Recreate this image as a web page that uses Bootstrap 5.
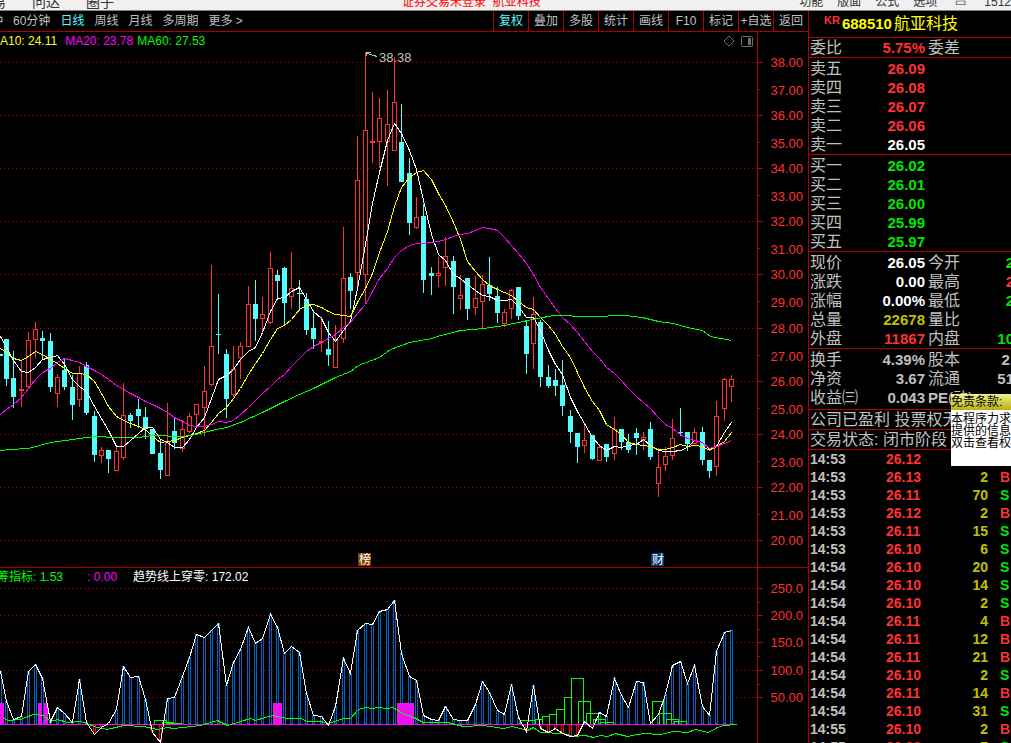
<!DOCTYPE html>
<html lang="zh-CN">
<head>
<meta charset="utf-8">
<meta name="viewport" content="width=device-width, initial-scale=1">
<title>航亚科技 688510</title>
<link href="https://cdn.jsdelivr.net/npm/bootstrap@5.3.0/dist/css/bootstrap.min.css" rel="stylesheet">
<style>
:root{--line:#b00000;--up:#ff3232;--down:#00e600;--txt:#c0c0c0;--cyan:#54fcfc;--vol:#c0c000}
body{background:#000;color:var(--txt);font:12px/16px "Liberation Sans","Noto Sans CJK SC",sans-serif}
button{background:none;border:0;padding:0;color:inherit;font:inherit;white-space:nowrap}
.menubar{height:11px;background:#f0f0f0;border-bottom:1px solid #808080;color:#333;white-space:nowrap}
.menubar button,.menubar span{line-height:16px}
.menu-side{width:402px;gap:26px;margin-left:-8px;font-size:14px}
.login{color:#f00}
.menu-main{gap:14px}
.toolbar{height:21px;border-bottom:1px solid var(--line)}
.toolbar .periods{gap:10px;margin-left:-9px}
.toolbar .on{color:var(--cyan)}
.tools button{width:35px;border-left:1px solid var(--line)}
.line-b{border-bottom:1px solid var(--line)}
.line-r{border-right:1px solid var(--line)}
.axis{width:50px;flex:none}
.legend{height:18px;white-space:nowrap}
.legend-sub{height:17px;padding-top:2px;white-space:nowrap}
.legend-cut{margin-left:-3px}
.k-up{color:var(--up)}.k-down{color:var(--down)}.k-white{color:#fff}.k-vol{color:var(--vol)}
.k-yellow{color:#ff0}.k-mag{color:#f0f}.k-green{color:#0f0}
svg{display:block}
.quote{width:203px;flex:none;border-left:1px solid var(--line)}
.stock{height:27px;font-size:16px;gap:2px}
.stock sup{font-size:11px;top:-4px;margin-left:15px}
.stock b{font-size:15px}
.grid-t{table-layout:fixed;width:204px;margin-left:1px;font-size:16px;line-height:19px;white-space:nowrap}
.grid-t th,.grid-t td{padding:0;height:19px;font-weight:400}
.grid-t td{font-size:15px;font-weight:700;text-align:right}
.grid-t th+td+th{padding-left:3px}
.c1{width:50px}.c2{width:65px}.c3{width:53px}
.pad1{padding-top:1px}
.pad2{padding-bottom:2px}
.pe{font-size:15px}
.note{height:20px;line-height:19px;font-size:16px;padding-left:1px;white-space:nowrap;overflow:hidden}
.trades{table-layout:fixed;width:202px;margin-left:1px;font-size:14px;line-height:18px;font-weight:700}
.trades td{padding:0;height:18px}
.trades td:nth-child(3){color:var(--vol);text-align:right}
.trades td:nth-child(2){color:var(--up)}
.trades td:nth-child(4){padding-left:12px}
.t1{width:76px}.t2{width:50px}.t3{width:52px}
.tip{position:absolute;top:394px;right:0;width:60px;height:72px;background:#fff;color:#000;overflow:hidden;white-space:nowrap;line-height:12px}
.tip h2{font:inherit;line-height:16px;margin:0 0 3px;background:linear-gradient(#f0f090,#b8b010)}
</style>
<script src="https://cdn.jsdelivr.net/npm/bootstrap@5.3.0/dist/js/bootstrap.bundle.min.js" defer></script>
</head>
<body class="vh-100 overflow-hidden d-flex flex-column position-relative">
<header class="menubar d-flex align-items-end justify-content-between overflow-hidden">
  <div class="menu-side d-flex"><button>易</button><button>问达</button><button>圈子</button></div>
  <span class="login flex-grow-1 ps-2">证券交易未登录&nbsp; 航亚科技</span>
  <div class="menu-main d-flex"><button>功能</button><button>版面</button><button>公式</button><button>选项</button><button class="px-1">▭</button><span>1512</span></div>
</header>
<main class="d-flex flex-grow-1 overflow-hidden">
  <section class="flex-grow-1 overflow-hidden">
    <nav class="toolbar d-flex justify-content-between overflow-hidden">
      <div class="periods d-flex">
        <button>钟</button><button>60分钟</button><button class="on">日线</button><button>周线</button><button>月线</button><button>多周期</button><button>更多 &gt;</button>
      </div>
      <div class="tools d-flex">
        <button class="on">复权</button><button>叠加</button><button>多股</button><button>统计</button><button>画线</button><button>F10</button><button>标记</button><button>+自选</button><button>返回</button>
      </div>
    </nav>
    <div class="d-flex line-b">
      <div class="flex-grow-1 line-r overflow-hidden">
        <div class="legend d-flex align-items-center justify-content-between">
          <div class="d-flex gap-1"><span class="k-yellow">A10: 24.11</span><span class="k-mag ps-1">MA20: 23.78</span><span class="k-green">MA60: 27.53</span></div>
          <svg width="34" height="14" viewBox="0 0 34 14" fill="none" stroke="#707070" role="img" aria-label="图表设置"><path d="M6 2L11 7L6 12L1 7Z"/><rect x="18.500" y="2.500" width="11" height="10" rx="1"/><path d="M26.500 4V11" stroke-width="3"/></svg>
        </div>
        <svg id="kline" width="100%" height="517" viewBox="0 50 757 517" preserveAspectRatio="xMaxYMin meet" shape-rendering="crispEdges"></svg>
      </div>
      <svg id="kaxis" class="axis" height="535" viewBox="758 32 50 535" shape-rendering="crispEdges"></svg>
    </div>
    <div class="d-flex">
      <div class="flex-grow-1 line-r overflow-hidden">
        <div class="legend-sub d-flex align-items-center"><div class="legend-cut d-flex gap-4"><span class="k-green">筹指标: 1.53</span><span class="k-mag">: 0.00</span></div><span class="k-white ps-3">趋势线上穿零: 172.02</span></div>
        <svg id="trend" width="100%" height="158" viewBox="0 585 757 158" preserveAspectRatio="xMaxYMin meet" shape-rendering="crispEdges"></svg>
      </div>
      <svg id="taxis" class="axis" height="175" viewBox="758 568 50 175" shape-rendering="crispEdges"></svg>
    </div>
  </section>
  <aside class="quote overflow-hidden">
    <div class="stock line-b d-flex align-items-center k-yellow text-nowrap"><sup class="k-up fw-bold">KR</sup><b>688510</b><span>航亚科技</span></div>
    <div class="line-b"><table class="grid-t"><colgroup><col class="c1"><col class="c2"><col class="c3"><col></colgroup><tr><th>委比</th><td class="k-up">5.75%</td><th>委差</th><td></td></tr></table></div>
    <div class="line-b pad1"><table class="grid-t"><colgroup><col class="c1"><col class="c2"><col class="c3"><col></colgroup>
      <tr><th>卖五</th><td class="k-up">26.09</td></tr><tr><th>卖四</th><td class="k-up">26.08</td></tr><tr><th>卖三</th><td class="k-up">26.07</td></tr><tr><th>卖二</th><td class="k-up">26.06</td></tr><tr><th>卖一</th><td class="k-white">26.05</td></tr></table></div>
    <div class="line-b pad1"><table class="grid-t"><colgroup><col class="c1"><col class="c2"><col class="c3"><col></colgroup>
      <tr><th>买一</th><td class="k-down">26.02</td></tr><tr><th>买二</th><td class="k-down">26.01</td></tr><tr><th>买三</th><td class="k-down">26.00</td></tr><tr><th>买四</th><td class="k-down">25.99</td></tr><tr><th>买五</th><td class="k-down">25.97</td></tr></table></div>
    <div class="line-b pad1"><table class="grid-t"><colgroup><col class="c1"><col class="c2"><col class="c3"><col></colgroup>
      <tr><th>现价</th><td class="k-white">26.05</td><th>今开</th><td class="k-down">2</td></tr>
      <tr><th>涨跌</th><td class="k-white">0.00</td><th>最高</th><td class="k-up">2</td></tr>
      <tr><th>涨幅</th><td class="k-white">0.00%</td><th>最低</th><td class="k-down">2</td></tr>
      <tr><th>总量</th><td class="k-vol">22678</td><th>量比</th><td></td></tr>
      <tr><th>外盘</th><td class="k-up">11867</td><th>内盘</th><td class="k-down">10</td></tr></table></div>
    <div class="line-b pad1 pad2"><table class="grid-t"><colgroup><col class="c1"><col class="c2"><col class="c3"><col></colgroup>
      <tr><th>换手</th><td>4.39%</td><th>股本</th><td>2.</td></tr>
      <tr><th>净资</th><td>3.67</th><th>流通</th><td>51</td></tr>
      <tr><th>收益㈢</th><td>0.043</td><th class="pe"><b>PE</b>(动)</th><td></td></tr></table></div>
    <div class="note line-b">公司已盈利 投票权无</div>
    <div class="note line-b">交易状态: 闭市阶段</div>
    <table class="trades"><colgroup><col class="t1"><col class="t2"><col class="t3"><col></colgroup>
      <tr><td>14:53</td><td>26.12</td><td></td><td></td></tr>
      <tr><td>14:53</td><td>26.13</td><td>2</td><td class="k-up">B</td></tr>
      <tr><td>14:53</td><td>26.11</td><td>70</td><td class="k-down">S</td></tr>
      <tr><td>14:53</td><td>26.12</td><td>2</td><td class="k-up">B</td></tr>
      <tr><td>14:53</td><td>26.11</td><td>15</td><td class="k-down">S</td></tr>
      <tr><td>14:53</td><td>26.10</td><td>6</td><td class="k-down">S</td></tr>
      <tr><td>14:54</td><td>26.10</td><td>20</td><td class="k-down">S</td></tr>
      <tr><td>14:54</td><td>26.10</td><td>14</td><td class="k-down">S</td></tr>
      <tr><td>14:54</td><td>26.10</td><td>2</td><td class="k-down">S</td></tr>
      <tr><td>14:54</td><td>26.11</td><td>4</td><td class="k-up">B</td></tr>
      <tr><td>14:54</td><td>26.11</td><td>12</td><td class="k-up">B</td></tr>
      <tr><td>14:54</td><td>26.11</td><td>21</td><td class="k-up">B</td></tr>
      <tr><td>14:54</td><td>26.10</td><td>2</td><td class="k-down">S</td></tr>
      <tr><td>14:54</td><td>26.11</td><td>14</td><td class="k-up">B</td></tr>
      <tr><td>14:54</td><td>26.10</td><td>31</td><td class="k-down">S</td></tr>
      <tr><td>14:55</td><td>26.10</td><td>2</td><td class="k-up">B</td></tr>
      <tr><td>14:55</td><td>26.09</td><td>7</td><td class="k-down">S</td></tr>
    </table>
  </aside>
</main>
<div class="tip"><h2>免责条款:</h2>本程序力求<br>提供的信息<br>双击查看权</div>
<script>
// One candle per row: x, high, body top, body bottom, low, rising (1) or falling (0)
const K=`0 354 354 356 356 0|6 339 339 379 386 0|13 351 378 397 408 0|21 360 389 391 407 1|28 332 340 387 388 1|35 322 329 340 358 1|42 331 338 341 360 0|50 333 341 387 392 0|57 374 377 394 407 1|64 358 370 387 390 0|72 375 387 405 420 0|79 366 373 400 407 1|86 362 365 413 415 0|94 411 416 455 462 0|101 447 450 456 463 1|108 450 450 459 473 0|116 447 451 471 471 1|123 383 415 458 460 1|130 413 415 421 428 0|138 399 409 416 428 0|145 407 417 429 439 0|152 429 429 454 454 0|160 440 453 470 479 0|167 403 441 476 476 1|174 418 431 443 449 0|182 420 429 449 452 1|189 413 416 432 433 1|196 404 404 415 427 1|204 366 391 408 436 1|211 265 346 385 386 1|218 294 334 335 354 0|226 349 354 399 418 0|233 346 369 395 397 1|240 342 346 358 379 1|248 286 304 347 347 1|255 280 304 319 341 0|262 297 314 319 334 1|270 252 268 323 324 1|277 270 275 281 298 0|284 267 268 303 325 0|291 252 288 297 309 1|299 280 293 294 311 0|306 293 299 330 335 0|313 310 328 339 349 0|321 316 341 343 352 1|328 321 349 355 366 0|335 325 340 368 368 1|343 227 278 339 343 1|350 273 277 291 309 0|357 136 180 273 288 1|365 52 130 275 304 1|372 92 141 143 163 1|379 98 118 142 168 1|387 90 124 142 186 1|394 57 102 151 151 1|401 104 142 182 182 0|409 158 173 223 235 0|416 197 217 228 229 1|423 204 216 280 293 0|431 267 273 276 295 0|438 257 273 276 287 1|445 237 256 268 286 1|453 256 261 287 314 0|460 275 295 299 310 1|467 278 278 309 320 0|475 276 298 308 315 1|482 275 284 302 328 1|489 257 285 294 301 0|497 287 296 313 323 0|504 309 312 324 327 1|511 289 290 309 319 1|518 287 287 316 320 0|526 320 326 354 374 0|533 297 314 344 369 1|540 320 322 377 387 0|548 365 377 386 388 0|555 369 380 386 396 0|562 360 385 406 416 0|570 410 416 432 443 0|577 433 433 447 463 0|584 423 440 446 453 1|592 435 435 459 460 0|599 444 447 461 461 1|606 444 444 457 462 0|614 417 429 454 460 1|621 429 429 442 450 0|628 434 442 450 453 0|636 428 433 438 455 0|643 432 437 440 450 1|650 422 429 457 460 0|658 448 467 484 497 1|665 447 456 465 471 1|672 419 438 456 460 1|680 408 432 433 436 0|687 432 432 444 451 0|694 428 432 444 444 1|702 427 432 460 465 0|709 460 460 471 478 0|716 401 416 467 476 1|724 378 379 409 421 1|731 375 379 387 402 1`.split('|').map(r=>r.split(' ').map(Number));
const X=K.map(k=>k[0]);
const MA5=[336,347,360,371,372,367,359,357,355,364,379,386,391,406,418,430,446,446,440,433,427,427,439,442,447,447,439,427,417,398,379,375,369,359,351,347,332,311,298,297,291,287,299,311,318,332,341,330,321,288,244,203,172,140,123,133,150,169,200,234,254,260,274,278,284,290,295,296,300,300,299,306,317,317,330,350,364,374,397,411,423,437,445,450,446,447,445,444,439,445,450,451,451,450,447,440,442,449,446,432,422];
const MA10=[348,352,358,360,356,351,354,359,363,368,373,373,374,381,393,406,416,420,423,426,429,436,442,441,440,437,435,433,430,422,413,407,398,388,374,363,353,339,328,325,319,309,305,304,307,311,314,315,316,302,288,273,252,231,206,187,177,172,170,179,193,205,222,239,261,271,279,285,289,292,295,301,307,309,317,325,334,346,357,372,387,401,410,424,429,434,442,444,445,446,449,449,447,444,446,445,446,450,446,441,432];
const MA20=[414,409,404,397,388,379,372,368,362,358,360,362,366,370,374,379,385,389,393,397,401,404,408,412,417,421,425,426,426,424,421,422,420,414,407,400,393,386,379,374,366,358,351,346,342,338,334,327,322,313,304,291,278,268,257,250,245,243,243,242,241,239,236,234,233,230,227,228,230,237,245,253,263,274,287,298,308,317,324,332,341,351,358,367,373,380,388,396,402,408,417,424,428,434,438,440,442,448,446,443,440];
const MA60='0,450 10,449 28,448 50,442 72,439 94,436 116,437 138,437 152,435 182,436 196,434 211,430 226,427 240,422 262,412 284,401 299,394 313,388 335,377 350,371 358,365 379,357 390,349 409,342 431,338 437,336 460,330 483,328 504,325 518,322 532,319 553,315 590,316 625,315 642,317 658,321 673,323 687,327 702,330 710,336 731,340';
const T=[671,701,719,716,671,664,678,721,707,713,722,679,722,734,727,723,709,666,677,676,699,732,742,698,697,676,657,634,637,630,623,685,662,649,627,643,638,614,627,653,646,652,693,715,716,725,706,658,673,630,623,624,611,609,600,653,676,680,715,719,720,706,719,720,720,704,681,692,710,714,684,717,731,685,728,732,728,733,736,735,721,728,712,716,678,695,707,681,682,723,714,694,665,661,683,665,706,715,651,632,630];
const SIG='3,718 8,720 20,719 33,714 43,715 50,721 57,719 67,722 80,721 97,727 107,729 123,725 143,726 157,729 167,727 173,728 200,725 217,720 227,725 240,721 250,718 255,720 265,717 272,715 287,718 300,718 307,721 320,721 328,723 343,718 350,718 358,709 365,707 372,708 378,707 387,708 393,707 400,712 413,717 423,722 447,722 463,726 483,725 503,728 512,726 527,730 533,727 540,732 563,733 573,736 585,735 593,737 600,735 607,736 615,733 627,736 643,733 660,734 673,731 687,732 695,729 708,732 717,727 723,725 737,724';
const $=id=>document.getElementById(id);
const pts=a=>a.map((y,i)=>X[i]+','+y).join(' ');
const poly=(p,c)=>`<polyline points="${p}" fill="none" stroke="${c}" transform="translate(.5 .5)"/>`;
const rc=(x,y,w,h,c)=>`<rect x="${x}" y="${y}" width="${w}" height="${h}" fill="${c}"/>`;
const box=(x,y,w,h,c,f)=>`<rect x="${x+.5}" y="${y+.5}" width="${w-1}" height="${Math.max(h-1,0)}" fill="${f||'none'}" stroke="${c}"/>`;
const dots=y=>`<path d="M0 ${y+.5}H757" stroke="#b00000" stroke-dasharray="1 3"/>`;
const txt=(x,y,s,c,size,a)=>`<text x="${x}" y="${y}" fill="${c}" font-size="${size}" text-anchor="${a||'start'}">${s}</text>`;
const grid=[62,115,168,221,274,328,381,434,487,540];
const minor=[89,142,195,248,301,355,408,461,514];

let s=grid.map(dots).join('');
for(const [x,h,t,b,l,up] of K){
  const c=up?'#ff3232':'#54fcfc';
  s+=rc(x,h,1,l-h,c)+(up&&b-t>2?box(x-2,t,5,b-t,c,'#000'):rc(x-2,t,5,b-t,c));
}
s+=poly(pts(MA5),'#fff')+poly(pts(MA10),'#ff0')+poly(pts(MA20),'#f0f')+poly(MA60,'#0f0');
s+='<path d="M377 56.500L366 53M371 52H366V56" fill="none" stroke="#c0c0c0"/>'+txt(379,62,'38.38','#c0c0c0',13);
s+=rc(358,553,13,13,'#804000')+txt(359,564,'榜','#fff',12)+rc(651,553,13,13,'#003c78')+txt(652,564,'财','#fff',12);
$('kline').innerHTML=s;

s='';
grid.forEach((y,i)=>{s+=rc(758,y,5,1,'#b00000')+txt(803,y+5,(38-2*i)+'.00','#ff3232',13,'end')});
minor.forEach((y,i)=>{s+=rc(758,y,2,1,'#b00000')+txt(803,y+6,(37-2*i)+'.00','#ff3232',13,'end')});
$('kaxis').innerHTML=s;

s=[588,615,642,670,697].map(dots).join('')+rc(0,724,734,1,'#f0f');
T.forEach((y,i)=>{s+=y<724?box(X[i]-1,y,3,724-y,'#0064c8','#000'):box(X[i]-1,724,3,y-724,'#ff0000','#000')});
[[0,4],[38,4],[44,4],[273,9],[397,17]].forEach(([x,w])=>s+=rc(x,703,w,21,'#f010f0'));
// left, right, top of each step of the green histogram
[[154,166,720],[162,173,722],[166,181,723],[520,535,720],[535,542,719],[542,549,716],[549,556,714],[556,564,709],[564,571,697],[571,583,678],[578,590,701],[586,598,713],[593,605,719],[600,613,722],[652,663,701],[659,671,713],[666,678,719],[674,686,721]].forEach(([a,b,t])=>s+=box(a,t,b-a+1,725-t,'#0f0'));
s+=rc(0,724,734,1,'#f0f')+poly(SIG,'#0f0')+poly(pts(T),'#fff');
$('trend').innerHTML=s;

s='';
[588,615,642,670,697].forEach((y,i)=>{s+=rc(758,y,5,1,'#b00000')+rc(758,y+14,2,1,i<4?'#b00000':'none')+txt(803,y+5,['250.0','200.0','150.0','100.0','50.00'][i],'#ff3232',13,'end')});
$('taxis').innerHTML=s;
</script>
</body>
</html>
